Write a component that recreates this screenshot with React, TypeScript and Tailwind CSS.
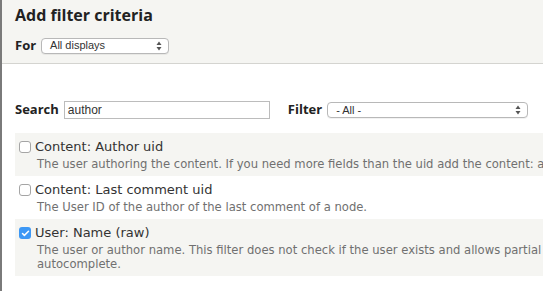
import { Check } from "lucide-react"

const font = { fontFamily: '"DejaVu Sans", "Liberation Sans", sans-serif' }

function SelectBox({ label, width }: { label: string; width: string }) {
  return (
    <div
      className={`${width} h-[16px] flex items-center justify-between rounded-[4px] border border-[#b8b8b8] bg-white pl-[8px] pr-[6px] text-[11px] text-[#333] shadow-[0_1px_0_rgba(0,0,0,0.05)] font-['Liberation_Sans',sans-serif]`}
    >
      <span className="leading-none">{label}</span>
      <svg width="6" height="10" viewBox="0 0 6 10" className="text-[#555]">
        <path d="M3 0.5 L5.5 4 H0.5 Z" fill="currentColor" />
        <path d="M3 9.5 L5.5 6 H0.5 Z" fill="currentColor" />
      </svg>
    </div>
  )
}

interface Item {
  label: string
  desc: string[]
  checked?: boolean
  shaded?: boolean
}

const items: Item[] = [
  {
    label: "Content: Author uid",
    desc: ["The user authoring the content. If you need more fields than the uid add the content: author relationship"],
    shaded: true,
  },
  {
    label: "Content: Last comment uid",
    desc: ["The User ID of the author of the last comment of a node."],
  },
  {
    label: "User: Name (raw)",
    desc: [
      "The user or author name. This filter does not check if the user exists and allows partial",
      "autocomplete.",
    ],
    checked: true,
    shaded: true,
  },
]

function Row({ item }: { item: Item }) {
  return (
    <div className={`${item.shaded ? "bg-[#f5f5f2]" : "bg-white"} pl-[4px] pt-[6px] pb-[5px]`}>
      <div className="flex items-center h-[16px]">
        {item.checked ? (
          <span className="w-[12px] h-[12px] rounded-[3px] bg-[#3d98f5] flex items-center justify-center">
            <Check className="w-[9px] h-[9px] text-white" strokeWidth={4} />
          </span>
        ) : (
          <span className="w-[12px] h-[12px] rounded-[3px] border border-[#a5a5a5] bg-white" />
        )}
        <span className="ml-[4px] text-[13px] text-[#333]">{item.label}</span>
      </div>
      <div className="pl-[18px] text-[11.6px] leading-[14px] text-[#707070] mt-[2px] whitespace-nowrap">
        {item.desc.map((d, i) => (
          <div key={i}>{d}</div>
        ))}
      </div>
    </div>
  )
}

const bold = "font-bold text-[#222] font-['Open_Sans',sans-serif]"

export default function App() {
  return (
    <div className="w-[543px] h-[291px] overflow-hidden bg-white border-l-2 border-[#7a7a7a]" style={font}>
      <div className="bg-[#f5f5f2] border-b border-[#d4d4d0] h-[64px] pl-[13px] pt-[3px]">
        <h1 className={`text-[16px] leading-[24px] ${bold}`}>Add filter criteria</h1>
        <div className="flex items-center mt-[9px] gap-[5px]">
          <span className={`text-[13px] ${bold}`}>For</span>
          <SelectBox label="All displays" width="w-[128px]" />
        </div>
      </div>
      <div className="pl-[13px] pt-[37px]">
        <div className="flex items-center h-[18px]">
          <span className={`text-[13px] ${bold}`}>Search</span>
          <div className="ml-[5px] w-[206px] h-[18px] border border-[#bcbcbc] bg-white flex items-center pl-[3px] text-[12px] text-[#333] font-['Liberation_Sans',sans-serif]">
            author
          </div>
          <span className={`ml-[18px] text-[13px] ${bold}`}>Filter</span>
          <div className="ml-[5px]">
            <SelectBox label="- All -" width="w-[201px]" />
          </div>
        </div>
        <div className="mt-[14px]">
          {items.map((item) => (
            <Row key={item.label} item={item} />
          ))}
        </div>
      </div>
    </div>
  )
}
